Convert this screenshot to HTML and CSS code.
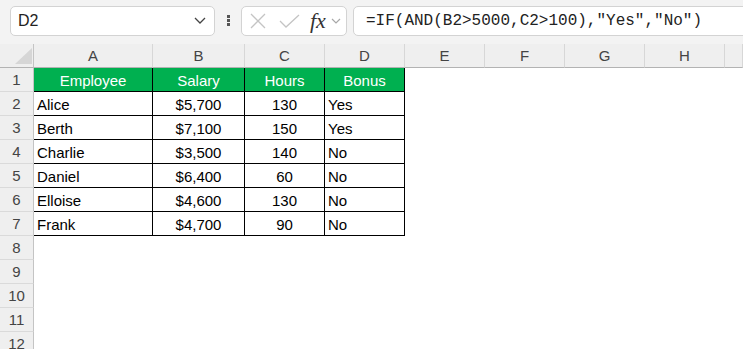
FILE: index.html
```html
<!DOCTYPE html>
<html lang="en">
<head>
    <meta charset="UTF-8">
    <meta name="viewport" content="width=device-width, initial-scale=1.0">
    <title>Bonus sheet</title>
    <link rel="stylesheet" href="styles.css">
</head>
<body>

<div class="toolbar">
    <div class="namebox">
        <span>D2</span>
        <svg class="chevron" width="12" height="7" viewBox="0 0 12 7"><path d="M1 1 L6 6 L11 1" fill="none" stroke="#444" stroke-width="1.3"/></svg>
    </div>
    <div class="grip"><i></i><i></i><i></i></div>
    <div class="fxbox">
        <svg width="16" height="16" viewBox="0 0 16 16"><path d="M1 1 L15 15 M15 1 L1 15" stroke="#c4c4c4" stroke-width="1.3"/></svg>
        <svg width="21" height="14" viewBox="0 0 21 14"><path d="M1 7 L7 13 L20 1" fill="none" stroke="#c4c4c4" stroke-width="1.3"/></svg>
        <span class="fx">fx</span>
        <svg width="10" height="6" viewBox="0 0 10 6"><path d="M1 1 L5 5 L9 1" fill="none" stroke="#a8a8a8" stroke-width="1.2"/></svg>
    </div>
    <div class="formula">=IF(AND(B2&gt;5000,C2&gt;100),"Yes","No")</div>
</div>

<div class="sheet">
    <div class="row">
        <div class="corner"><span class="tri"></span></div>
        <div class="colhead">A</div>
        <div class="colhead">B</div>
        <div class="colhead">C</div>
        <div class="colhead">D</div>
        <div class="colhead">E</div>
        <div class="colhead">F</div>
        <div class="colhead">G</div>
        <div class="colhead">H</div>
        <div class="colhead"></div>
    </div>
    <div class="row">
        <div class="rowhead">1</div>
        <div class="cell title">Employee</div>
        <div class="cell title">Salary</div>
        <div class="cell title">Hours</div>
        <div class="cell title">Bonus</div>
        <div class="empty"></div>
    </div>
    <div class="row">
        <div class="rowhead">2</div>
        <div class="cell">Alice</div>
        <div class="cell mid">$5,700</div>
        <div class="cell mid">130</div>
        <div class="cell">Yes</div>
        <div class="empty"></div>
    </div>
    <div class="row">
        <div class="rowhead">3</div>
        <div class="cell">Berth</div>
        <div class="cell mid">$7,100</div>
        <div class="cell mid">150</div>
        <div class="cell">Yes</div>
        <div class="empty"></div>
    </div>
    <div class="row">
        <div class="rowhead">4</div>
        <div class="cell">Charlie</div>
        <div class="cell mid">$3,500</div>
        <div class="cell mid">140</div>
        <div class="cell">No</div>
        <div class="empty"></div>
    </div>
    <div class="row">
        <div class="rowhead">5</div>
        <div class="cell">Daniel</div>
        <div class="cell mid">$6,400</div>
        <div class="cell mid">60</div>
        <div class="cell">No</div>
        <div class="empty"></div>
    </div>
    <div class="row">
        <div class="rowhead">6</div>
        <div class="cell">Elloise</div>
        <div class="cell mid">$4,600</div>
        <div class="cell mid">130</div>
        <div class="cell">No</div>
        <div class="empty"></div>
    </div>
    <div class="row">
        <div class="rowhead">7</div>
        <div class="cell">Frank</div>
        <div class="cell mid">$4,700</div>
        <div class="cell mid">90</div>
        <div class="cell">No</div>
        <div class="empty"></div>
    </div>
    <div class="row"><div class="rowhead">8</div></div>
    <div class="row"><div class="rowhead">9</div></div>
    <div class="row"><div class="rowhead">10</div></div>
    <div class="row"><div class="rowhead">11</div></div>
    <div class="row"><div class="rowhead">12</div></div>
</div>

</body>
</html>
```

FILE: styles.css
```css
body {
    margin: 0;
    font-family: "Liberation Sans", Arial, sans-serif;
    font-size: 15px;
    color: #000;
    background-color: #fff;
    overflow: hidden;
}
.toolbar {
    display: flex;
    align-items: center;
    height: 44px;
    padding-left: 10px;
    background-color: #f3f3f3;
    box-sizing: border-box;
}
.namebox {
    display: flex;
    align-items: center;
    justify-content: space-between;
    width: 205px;
    height: 30px;
    padding: 0 8px 0 7px;
    margin-top: -3px;
    background-color: #fff;
    border: 1px solid #d3d3d3;
    border-radius: 5px;
    box-sizing: border-box;
    font-size: 16px;
    color: #222;
}
.grip {
    display: flex;
    flex-direction: column;
    gap: 1px;
    margin: -3px 11px 0 12px;
}
.grip i {
    width: 3px;
    height: 3px;
    background-color: #555;
}
.fxbox {
    display: flex;
    align-items: center;
    width: 106px;
    height: 30px;
    padding-left: 8px;
    margin-top: -3px;
    background-color: #fff;
    border: 1px solid #d3d3d3;
    border-radius: 5px;
    box-sizing: border-box;
}
.fxbox svg:nth-child(2) {
    margin-left: 13px;
}
.fx {
    margin-left: 10px;
    font-family: "Liberation Serif", serif;
    font-style: italic;
    font-size: 22px;
    color: #333;
}
.fxbox svg:last-child {
    margin-left: 5px;
}
.formula {
    flex: 1;
    height: 30px;
    margin-left: 6px;
    margin-top: -3px;
    margin-right: -10px;
    padding-left: 12px;
    line-height: 28px;
    background-color: #fff;
    border: 1px solid #d3d3d3;
    border-radius: 5px;
    box-sizing: border-box;
    font-family: "Liberation Mono", monospace;
    font-size: 16px;
    color: #222;
    white-space: nowrap;
}
.row {
    display: grid;
    grid-template-columns: 34px 119px 92px 80px 80px 80px 80px 80px 80px 1fr;
    height: 24px;
}
.row > div {
    box-sizing: border-box;
    height: 24px;
    line-height: 24px;
    white-space: nowrap;
}
.corner {
    position: relative;
    background-color: #efefef;
    border-right: 1px solid #c4c4c4;
    border-bottom: 1px solid #b3b3b3;
}
.tri {
    position: absolute;
    right: 1px;
    bottom: 3px;
    width: 0;
    height: 0;
    border-left: 17px solid transparent;
    border-bottom: 16px solid #d6d6d6;
}
.colhead {
    background-color: #efefef;
    border-right: 1px solid #d7d7d7;
    border-bottom: 1px solid #b3b3b3;
    text-align: center;
    color: #444;
}
.rowhead {
    background-color: #efefef;
    border-right: 1px solid #c4c4c4;
    border-bottom: 1px solid #dadada;
    text-align: center;
    color: #444;
}
.cell {
    padding: 1px 0 0 3px;
    border-right: 1px solid #000;
    border-bottom: 1px solid #000;
}
.title {
    background-color: #00b050;
    color: #fff;
    text-align: center;
    padding-left: 0;
}
.mid {
    text-align: center;
    padding-left: 0;
}
```
